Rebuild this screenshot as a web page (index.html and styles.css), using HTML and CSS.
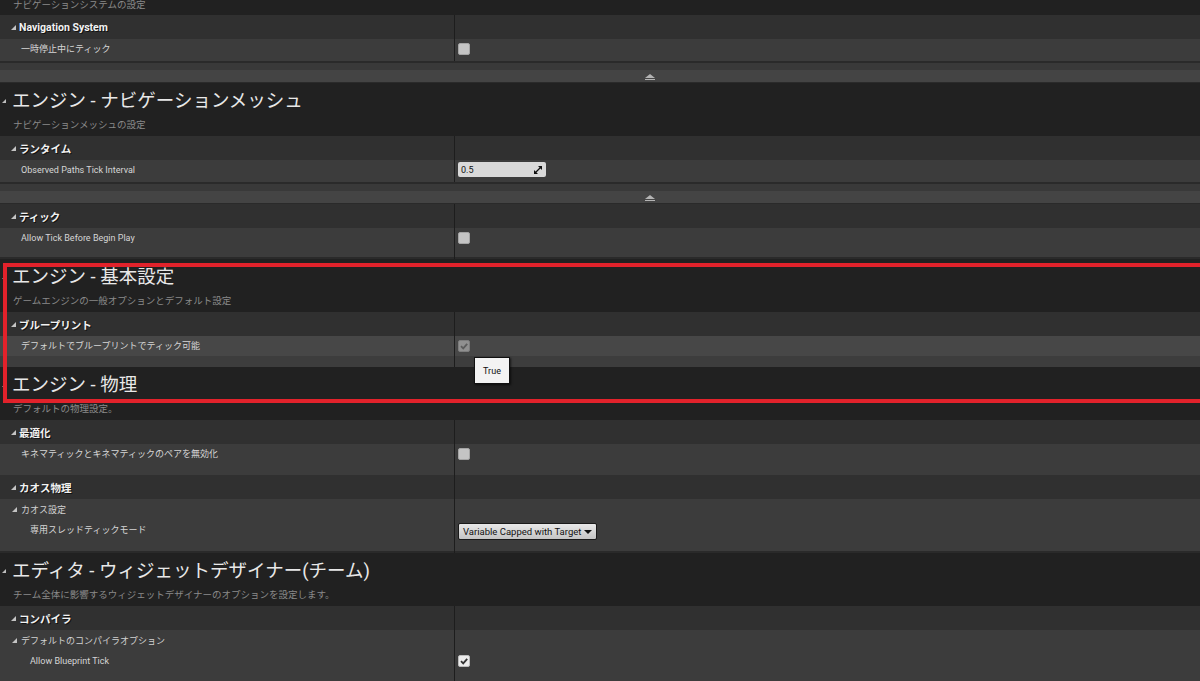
FILE: index.html
```html
<!DOCTYPE html>
<html lang="ja">
<head>
  <meta charset="UTF-8">
  <title>プロジェクト設定</title>
  <link rel="stylesheet" href="styles.css">
</head>
<body>
  <div class="panel">

    <!-- ナビゲーションシステム -->
    <div class="cat tail"><p class="cat-desc">ナビゲーションシステムの設定</p></div>
    <div class="row sub"><div class="name"><i class="tri"></i>Navigation System</div><div class="val"></div></div>
    <div class="row prop"><div class="name">一時停止中にティック</div><div class="val"><span class="check"></span></div></div>
    <div class="expand"><svg width="10" height="6" viewBox="0 0 10 6"><polygon points="0,4 5,0 10,4" fill="#b4b4b4"/><rect x="0" y="5" width="10" height="1" fill="#b4b4b4"/></svg></div>

    <!-- ナビゲーションメッシュ -->
    <div class="cat"><i class="ctri"></i><h2 class="cat-title">エンジン - ナビゲーションメッシュ</h2><p class="cat-desc">ナビゲーションメッシュの設定</p></div>
    <div class="row sub"><div class="name"><i class="tri"></i>ランタイム</div><div class="val"></div></div>
    <div class="row prop">
      <div class="name">Observed Paths Tick Interval</div>
      <div class="val">
        <span class="num">0.5
          <svg width="8" height="8" viewBox="0 0 8 8"><polygon points="4,0 8,0 8,4" fill="#111"/><polygon points="0,4 0,8 4,8" fill="#111"/><line x1="1.5" y1="6.5" x2="6.5" y2="1.5" stroke="#111" stroke-width="1.2"/></svg>
        </span>
      </div>
    </div>
    <div class="expand"><svg width="10" height="6" viewBox="0 0 10 6"><polygon points="0,4 5,0 10,4" fill="#b4b4b4"/><rect x="0" y="5" width="10" height="1" fill="#b4b4b4"/></svg></div>
    <div class="row sub"><div class="name"><i class="tri"></i>ティック</div><div class="val"></div></div>
    <div class="row prop last sep"><div class="name">Allow Tick Before Begin Play</div><div class="val"><span class="check"></span></div></div>

    <!-- 基本設定 -->
    <div class="cat"><i class="ctri"></i><h2 class="cat-title">エンジン - 基本設定</h2><p class="cat-desc">ゲームエンジンの一般オプションとデフォルト設定</p></div>
    <div class="row sub"><div class="name"><i class="tri"></i>ブループリント</div><div class="val"></div></div>
    <div class="row prop last hl">
      <div class="name">デフォルトでブループリントでティック可能</div>
      <div class="val"><span class="check dim"><svg width="10" height="10" viewBox="0 0 10 10"><path d="M2 5.2 L4.2 7.4 L8.2 2.8" fill="none" stroke="#5c5c5c" stroke-width="1.8"/></svg></span></div>
    </div>

    <!-- 物理 -->
    <div class="cat"><i class="ctri"></i><h2 class="cat-title">エンジン - 物理</h2><p class="cat-desc">デフォルトの物理設定。</p></div>
    <div class="row sub"><div class="name"><i class="tri"></i>最適化</div><div class="val"></div></div>
    <div class="row prop last"><div class="name">キネマティックとキネマティックのペアを無効化</div><div class="val"><span class="check"></span></div></div>
    <div class="row sub"><div class="name"><i class="tri"></i>カオス物理</div><div class="val"></div></div>
    <div class="row group"><div class="name"><i class="tri"></i>カオス設定</div><div class="val"></div></div>
    <div class="row prop nested tall sep">
      <div class="name">専用スレッドティックモード</div>
      <div class="val"><span class="combo">Variable Capped with Target<i class="arrow"></i></span></div>
    </div>

    <!-- ウィジェットデザイナー -->
    <div class="cat"><i class="ctri"></i><h2 class="cat-title">エディタ - ウィジェットデザイナー(チーム)</h2><p class="cat-desc">チーム全体に影響するウィジェットデザイナーのオプションを設定します。</p></div>
    <div class="row sub"><div class="name"><i class="tri"></i>コンパイラ</div><div class="val"></div></div>
    <div class="row group"><div class="name"><i class="tri"></i>デフォルトのコンパイラオプション</div><div class="val"></div></div>
    <div class="row prop nested last">
      <div class="name">Allow Blueprint Tick</div>
      <div class="val"><span class="check on"><svg width="10" height="10" viewBox="0 0 10 10"><path d="M2 5.2 L4.2 7.4 L8.2 2.8" fill="none" stroke="#333" stroke-width="1.8"/></svg></span></div>
    </div>

    <!-- 注釈 -->
    <div class="mark"></div>
    <div class="tip">True</div>
  </div>
</body>
</html>
```

FILE: styles.css
```css
* {
  box-sizing: border-box;
}

body {
  margin: 0;
  background: #222;
  font-family: Roboto, "Noto Sans CJK JP", sans-serif;
  color: #d6d6d6;
  overflow: hidden;
}

.panel {
  position: relative;
  width: 1200px;
  height: 681px;
  overflow: hidden;
}

/* category */
.cat {
  position: relative;
  height: 53px;
  padding-top: 6px;
  background: #212121;
}

.cat-title {
  margin: 0;
  padding-left: 12px;
  font-size: 18.5px;
  font-weight: 400;
  line-height: 24px;
  color: #e8e8e8;
}

.cat-desc {
  margin: 6px 0 0;
  padding-left: 13px;
  font-size: 9.5px;
  line-height: 12px;
  color: #8a8a8a;
}

.tail {
  height: 16px;
  padding-top: 0;
}

.tail .cat-desc {
  margin-top: -1px;
}

.ctri {
  position: absolute;
  left: 2px;
  top: 16px;
  width: 0;
  height: 0;
  border-left: 4px solid transparent;
  border-bottom: 4px solid #bdbdbd;
}

/* rows */
.row {
  display: flex;
}

.row .name {
  width: 455px;
  border-right: 1px solid #1d1d1d;
  display: flex;
  align-items: center;
}

.row .val {
  flex: 1;
  padding-left: 3px;
}

.tri {
  width: 0;
  height: 0;
  border-left: 5px solid transparent;
  border-bottom: 5px solid #c4c4c4;
  margin-right: 3px;
}

.sub {
  height: 24px;
  background: #303030;
  font-size: 10.5px;
  font-weight: 700;
  color: #f2f2f2;
  text-shadow: 1px 1px 0 #111;
}

.sub .name {
  padding-left: 11px;
}

.group {
  height: 21px;
  background: #3c3c3c;
  font-size: 9px;
  color: #d2d2d2;
}

.group .name {
  padding-left: 12px;
}

.group .tri {
  margin-right: 4px;
}

.prop {
  height: 22px;
  background: #3c3c3c;
  font-size: 9px;
}

.prop .name {
  padding-left: 21px;
  align-items: flex-start;
  line-height: 20px;
}

.prop .val {
  padding-top: 4px;
}

.prop.nested .name {
  padding-left: 30px;
}

.prop.last {
  height: 31px;
}

.prop.tall {
  height: 33px;
}

.prop.hl {
  background: linear-gradient(#474747 0 20px, #3d3d3d 20px);
}

.sep {
  box-shadow: inset 0 -2px 0 #2a2a2a;
}

/* expand bar */
.expand {
  height: 22px;
  padding: 13px 0 0 645px;
  background: linear-gradient(#2a2a2a 0 2px, #393939 2px 9px, #444 9px 21px, #2a2a2a 21px);
}

.expand svg {
  display: block;
}

/* widgets */
.check {
  display: block;
  width: 12px;
  height: 12px;
  border-radius: 2px;
  background: #c4c4c4;
  border: 1px solid #a4a4a4;
}

.check svg {
  display: block;
}

.check.on {
  background: #ececec;
  border-color: #bcbcbc;
}

.check.dim {
  background: #909090;
  border-color: #7c7c7c;
}

.num {
  display: flex;
  justify-content: space-between;
  align-items: center;
  width: 88px;
  height: 15px;
  margin-top: -2px;
  padding: 0 4px 0 3px;
  border-radius: 2px;
  background: #d9d9d9;
  color: #111;
  font-size: 9px;
}

.combo {
  display: inline-flex;
  align-items: center;
  gap: 3px;
  height: 17px;
  margin-top: -1px;
  padding: 0 4px;
  border: 1px solid #1a1a1a;
  border-radius: 2px;
  background: linear-gradient(#e8e8e8, #c4c4c4);
  color: #111;
  font-size: 9.5px;
}

.combo .arrow {
  width: 0;
  height: 0;
  border-left: 4px solid transparent;
  border-right: 4px solid transparent;
  border-top: 4px solid #111;
}

/* annotation overlay */
.mark {
  position: absolute;
  left: 3px;
  top: 263px;
  width: 1210px;
  height: 140px;
  border: 4px solid #e2222b;
}

.tip {
  position: absolute;
  left: 474px;
  top: 357px;
  width: 36px;
  height: 27px;
  display: flex;
  align-items: center;
  justify-content: center;
  background: #f3f3f3;
  border: 1px solid #111;
  box-shadow: 1px 1px 2px rgba(0, 0, 0, 0.6);
  color: #111;
  font-size: 9px;
}
```
